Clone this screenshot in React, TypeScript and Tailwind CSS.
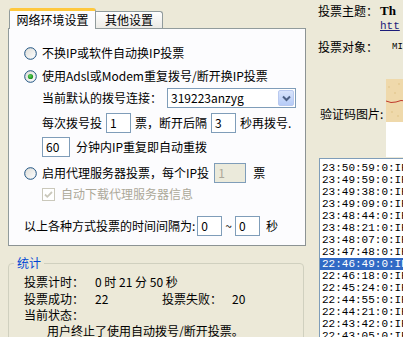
import React from 'react';

const logItems = [
  '23:50:59:0:IP',
  '23:49:59:0:IP',
  '23:49:38:0:IP',
  '23:49:09:0:IP',
  '23:48:44:0:IP',
  '23:48:21:0:IP',
  '23:48:07:0:IP',
  '23:47:48:0:IP',
  '22:46:49:0:IP',
  '22:46:18:0:IP',
  '22:45:24:0:IP',
  '22:44:55:0:IP',
  '22:44:21:0:IP',
  '22:43:42:0:IP',
  '22:43:05:0:IP',
];

function Radio({ checked }: { checked?: boolean }) {
  return (
    <svg width="13" height="13" viewBox="0 0 13 13" className="shrink-0">
      <defs>
        <linearGradient id="rg" x1="0" y1="0" x2="1" y2="1">
          <stop offset="0" stopColor="#dcdcd7" />
          <stop offset="1" stopColor="#ffffff" />
        </linearGradient>
        <radialGradient id="dot" cx="0.4" cy="0.4" r="0.6">
          <stop offset="0" stopColor="#5ed35e" />
          <stop offset="1" stopColor="#1a8e1a" />
        </radialGradient>
      </defs>
      <circle cx="6.5" cy="6.5" r="5.8" fill="url(#rg)" stroke="#1c5180" strokeWidth="1" />
      {checked && <circle cx="6.5" cy="6.5" r="2.6" fill="url(#dot)" />}
    </svg>
  );
}

function Field({ value, w, disabled }: { value: string; w: string; disabled?: boolean }) {
  return (
    <div
      className={`${w} h-[20px] border border-[#7f9db9] px-[3px] flex items-center text-[12px] ${
        disabled ? 'bg-[#ebeadb] text-[#aca899]' : 'bg-white text-black'
      }`}
    >
      {value}
    </div>
  );
}

export default function App() {
  return (
    <div
      className="w-[403px] h-[337px] overflow-hidden bg-[#ece9d8] flex text-[12px] leading-[14px] text-black"
      style={{ fontFamily: '"Noto Sans CJK SC", "Noto Sans", sans-serif' }}
    >
      {/* left side: tabs + stats */}
      <div className="w-[306px] shrink-0 pl-[8px] pt-[8px] flex flex-col">
        {/* tab strip */}
        <div className="shrink-0 flex items-end h-[20px] pl-[1px]">
          <div className="w-[87px] h-[21px] -mb-[1px] relative z-10 bg-[#fcfcfe] border border-b-0 border-[#919b9c] border-t-[3px] border-t-[#ffc83c] rounded-t-[3px] flex items-center justify-center">
            网络环境设置
          </div>
          <div className="w-[67px] h-[17px] bg-gradient-to-b from-[#fefefe] to-[#ecebe6] border border-l-0 border-b-0 border-[#919b9c] rounded-tr-[3px] flex items-center justify-center">
            其他设置
          </div>
        </div>

        {/* tab panel */}
        <div className="shrink-0 w-[298px] h-[218px] bg-[#fcfcfe] border border-[#919b9c] border-r-[#8c9394] border-b-[#8c9394] pl-[15px] pt-[14px] flex flex-col">
          <div className="h-[20px] flex items-center gap-[5px]">
            <Radio />
            <span>不换IP或软件自动换IP投票</span>
          </div>
          <div className="h-[20px] mt-[3px] flex items-center gap-[5px]">
            <Radio checked />
            <span>使用Adsl或Modem重复拨号/断开换IP投票</span>
          </div>
          <div className="h-[20px] mt-[2px] pl-[18px] flex items-center">
            <span className="w-[125px]">当前默认的拨号连接：</span>
            <div className="w-[129px] h-[20px] border border-[#7f9db9] bg-white flex items-center justify-between pl-[3px] pr-[1px]">
              <span>319223anzyg</span>
              <div className="w-[16px] h-[16px] rounded-[2px] bg-gradient-to-b from-[#d8e4fc] to-[#b6cbf7] border border-[#b9c9ef] flex items-center justify-center">
                <svg width="9" height="7" viewBox="0 0 9 7">
                  <path d="M1 1.5 L4.5 5 L8 1.5" fill="none" stroke="#4d6185" strokeWidth="2" />
                </svg>
              </div>
            </div>
          </div>
          <div className="h-[20px] mt-[5px] pl-[18px] flex items-center">
            <span>每次拨号投</span>
            <span className="ml-[4px]"><Field value="1" w="w-[25px]" /></span>
            <span className="ml-[4px]">票，断开后隔</span>
            <span className="ml-[4px]"><Field value="3" w="w-[25px]" /></span>
            <span className="ml-[4px]">秒再拨号.</span>
          </div>
          <div className="h-[20px] mt-[4px] pl-[18px] flex items-center">
            <Field value="60" w="w-[28px]" />
            <span className="ml-[6px]">分钟内IP重复即自动重拨</span>
          </div>
          <div className="h-[20px] mt-[6px] flex items-center gap-[5px]">
            <Radio />
            <span>启用代理服务器投票，每个IP投</span>
            <Field value="1" w="w-[32px]" disabled />
            <span className="ml-[2px]">票</span>
          </div>
          <div className="h-[18px] mt-[2px] pl-[18px] flex items-center gap-[6px] text-[#aca899]">
            <svg width="13" height="13" viewBox="0 0 13 13" className="shrink-0">
              <rect x="0.5" y="0.5" width="12" height="12" fill="#ffffff" stroke="#cac8bb" />
              <path d="M3 6.5 L5.3 8.8 L10 4" fill="none" stroke="#cac8bb" strokeWidth="1.8" />
            </svg>
            <span>自动下载代理服务器信息</span>
          </div>
          <div className="h-[20px] mt-[13px] flex items-center">
            <span>以上各种方式投票的时间间隔为:</span>
            <span className="ml-[2px]"><Field value="0" w="w-[25px]" /></span>
            <span className="mx-[3px]">~</span>
            <Field value="0" w="w-[25px]" />
            <span className="ml-[6px]">秒</span>
          </div>
        </div>

        {/* stats group box */}
        <div className="shrink-0 relative mt-[17px] w-[296px] h-[90px] border border-[#d0d0bf] rounded-[4px] pl-[15px] pt-[10px]">
          <span className="absolute -top-[8px] left-[5px] px-[3px] bg-[#ece9d8] text-[#0046d5]">统计</span>
          <div className="flex h-[16px] items-center">
            <span className="w-[71px]">投票计时：</span>
            <span>0 时 21 分 50 秒</span>
          </div>
          <div className="flex h-[17px] items-center">
            <span className="w-[71px]">投票成功：</span>
            <span className="w-[67px]">22</span>
            <span className="w-[70px]">投票失败：</span>
            <span>20</span>
          </div>
          <div className="flex h-[16px] items-center">
            <span>当前状态：</span>
          </div>
          <div className="flex h-[16px] items-center pl-[23px]">
            <span>用户终止了使用自动拨号/断开投票。</span>
          </div>
        </div>
      </div>

      {/* right side */}
      <div className="flex-1 min-w-0 pl-[12px] flex flex-col">
        <div className="flex mt-[4px] h-[14px] items-center whitespace-nowrap">
          <span className="w-[62px] shrink-0">投票主题：</span>
          <span className="font-bold text-[13px]" style={{ fontFamily: '"Liberation Serif", serif' }}>
            Th
          </span>
        </div>
        <div className="flex h-[16px] items-center pl-[62px] whitespace-nowrap">
          <span className="underline text-[#1c1c7a] text-[11px]" style={{ fontFamily: '"Liberation Mono", monospace' }}>
            htt
          </span>
        </div>
        <div className="flex mt-[6px] h-[14px] items-center whitespace-nowrap">
          <span className="w-[74px] shrink-0">投票对象：</span>
          <span className="text-[9px]" style={{ fontFamily: '"Liberation Mono", monospace' }}>
            MI
          </span>
        </div>

        <div className="shrink-0 flex mt-[25px] h-[78px]">
          <div className="w-[68px] shrink-0 flex items-end pb-[36px] pl-[2px]">
            <span>验证码图片:</span>
          </div>
          <div className="flex-1 flex flex-col">
            <div className="h-[43px] bg-[#efd9ab] relative">
              <svg width="20" height="43" viewBox="0 0 20 43" className="absolute inset-0">
                <path d="M0 22 L5 23.5 L10 23 L15 21.5 L20 22" fill="none" stroke="#c0392b" strokeWidth="1" />
                <circle cx="3" cy="8" r="0.7" fill="#d9b97a" />
                <circle cx="9" cy="14" r="0.7" fill="#d9b97a" />
                <circle cx="13" cy="5" r="0.7" fill="#d9b97a" />
                <circle cx="6" cy="33" r="0.7" fill="#d9b97a" />
                <circle cx="12" cy="37" r="0.7" fill="#d9b97a" />
              </svg>
            </div>
            <div className="flex-1 bg-white" />
          </div>
        </div>

        <div className="mt-[1px] ml-[1px] flex-1 border border-[#7f9db9] border-r-0 border-b-0 bg-white pt-[3px] overflow-hidden">
          {logItems.map((t, i) => (
            <div
              key={t + i}
              className={`h-[12px] leading-[12px] pl-[2px] text-[11px] whitespace-nowrap ${
                i === 8 ? 'bg-[#316ac5] text-white' : 'text-black'
              }`}
              style={{ fontFamily: '"Liberation Mono", monospace' }}
            >
              {t}
            </div>
          ))}
        </div>
      </div>
    </div>
  );
}
